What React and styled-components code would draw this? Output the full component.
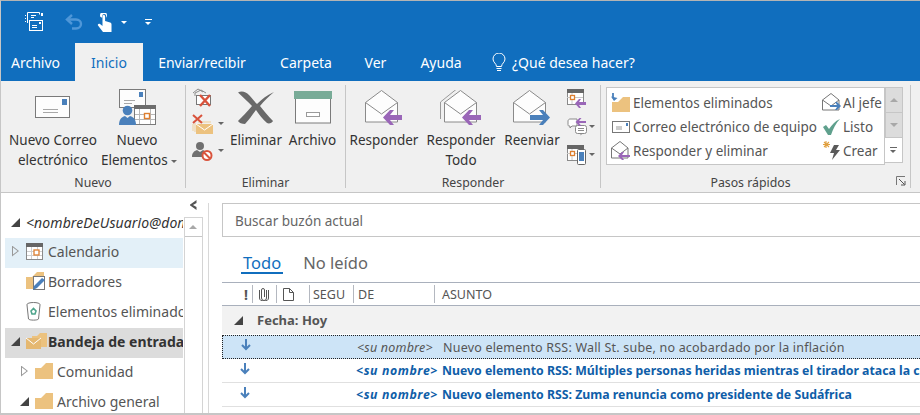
import styled, { createGlobalStyle } from 'styled-components'

const BLUE = '#106ebe'
const GREY = '#7a7a7a'
const PURPLE = '#9a66b8'
const STEEL = '#4a80bb'
const RED = '#d9533c'
const FOLDER = '#ecc27f'
const font = `"Noto Sans", "Open Sans", "Liberation Sans", sans-serif`

const Global = createGlobalStyle`
  html, body { margin: 0; padding: 0; background: #fff; }
  * { box-sizing: border-box; }
`

const Frame = styled.div`
  width: 920px;
  height: 415px;
  overflow: hidden;
  display: flex;
  flex-direction: column;
  border-top: 1px solid #b4b4b4;
  border-left: 1px solid #c6c6c6;
  border-bottom: 2px solid #c6c6c6;
  font-family: ${font};
  background: #fff;
`
const QuickBar = styled.div`
  height: 42px;
  flex: none;
  background: ${BLUE};
  display: flex;
  align-items: center;
  padding-left: 23px;
`
const QuickSlot = styled.div`
  width: ${({ $w }) => $w}px;
  display: flex;
  align-items: center;
`
const Customize = styled.span`
  display: block;
  width: 7px;
  height: 7px;
  border-top: 1px solid ${({ $dark }) => ($dark ? '#666' : '#fff')};
  position: relative;
  &::after {
    content: '';
    position: absolute;
    left: 0;
    top: 2px;
    border: 3.5px solid transparent;
    border-top-color: ${({ $dark }) => ($dark ? '#666' : '#fff')};
    border-bottom: 0;
  }
`
const TabRow = styled.div`
  height: 38px;
  flex: none;
  background: ${BLUE};
  display: flex;
  font-size: 14px;
`
const Tab = styled.div`
  width: ${({ $w }) => $w}px;
  margin-right: ${({ $gap }) => $gap || 0}px;
  display: flex;
  align-items: center;
  justify-content: center;
  color: ${({ $active }) => ($active ? BLUE : '#fff')};
  background: ${({ $active }) => ($active ? '#f0f0f0' : 'transparent')};
`
const TellMe = styled.div`
  display: flex;
  align-items: center;
  gap: 6px;
  padding-left: 10px;
  color: #fff;
`
const Ribbon = styled.div`
  height: 112px;
  flex: none;
  display: flex;
  padding-top: 4px;
  background: #f0f0f0;
  border-bottom: 1px solid #c6c6c6;
  color: #444;
  font-size: 13.5px;
`
const Group = styled.div`
  width: ${({ $w }) => $w}px;
  flex: none;
  display: flex;
  flex-direction: column;
`
const GroupBody = styled.div`
  height: 88px;
  display: flex;
  padding-left: ${({ $pad }) => $pad || 0}px;
`
const GroupLabel = styled.div`
  flex: 1;
  height: 19px;
  line-height: 19px;
  text-align: center;
  font-size: 12.3px;
  color: #444;
`
const Sep = styled.div`
  width: 1px;
  height: 103px;
  flex: none;
  background: #c6c6c6;
`
const BigButton = styled.div`
  width: ${({ $w }) => $w}px;
  flex: none;
  text-align: center;
  line-height: 20px;
  color: #333;
`
const IconSlot = styled.div`
  height: 45px;
  display: flex;
  align-items: center;
  justify-content: center;
  padding-top: ${({ $drop }) => $drop || 0}px;
`
const NoBreak = styled.div`
  white-space: nowrap;
`
const Caret = styled.span`
  display: inline-block;
  border: 3.5px solid transparent;
  border-top-color: ${({ $color }) => $color || '#666'};
  border-bottom: 0;
  vertical-align: middle;
`
const SmallColumn = styled.div`
  width: ${({ $w }) => $w}px;
  flex: none;
  padding-left: 3px;
  margin-top: ${({ $lift }) => -($lift || 0)}px;
  display: flex;
  flex-direction: column;
  gap: ${({ $gap }) => $gap || 0}px;
`
const SmallButton = styled.div`
  height: 27px;
  display: flex;
  align-items: center;
  gap: ${({ $gap }) => $gap || 5}px;
`
const Gallery = styled.div`
  width: 279px;
  height: 78px;
  margin-top: 2px;
  padding: 3px 0 0 2px;
  background: #fff;
  border: 1px solid #c6c6c6;
  overflow: hidden;
  display: flex;
  flex-direction: column;
`
const GalleryRow = styled.div`
  height: 24px;
  flex: none;
  display: flex;
  align-items: center;
  color: #555;
  white-space: nowrap;
`
const StepIcon = styled.div`
  width: ${({ $w }) => $w}px;
  flex: none;
  display: flex;
  justify-content: center;
`
const StepWide = styled.div`
  width: 188px;
  flex: none;
  overflow: hidden;
`
const StepText = styled.div`
  flex: 1;
  overflow: hidden;
`
const GalleryScroll = styled.div`
  width: 18px;
  height: 78px;
  margin-top: 2px;
  display: flex;
  flex-direction: column;
`
const ScrollStep = styled.div`
  height: 26px;
  display: flex;
  align-items: center;
  justify-content: center;
  background: ${({ $disabled }) => ($disabled ? '#dcdcdc' : '#fff')};
  border: 1px solid #c6c6c6;
  border-left: ${({ $disabled }) => ($disabled ? '1px solid #c6c6c6' : 'none')};
  margin-top: -1px;
  &:first-child { margin-top: 0; }
`
const Up = styled.span`
  display: block;
  border: 4px solid transparent;
  border-bottom-color: #a8a8a8;
  border-top: 0;
`
const Down = styled.span`
  display: block;
  border: 4px solid transparent;
  border-top-color: #a8a8a8;
  border-bottom: 0;
`
const StepsFoot = styled.div`
  position: relative;
  display: flex;
  padding-right: 10px;
`
const Launcher = styled.div`
  position: absolute;
  right: 4px;
  top: 3px;
  line-height: 0;
`
const Body = styled.div`
  flex: 1;
  min-height: 0;
  display: flex;
`
const NavTree = styled.div`
  width: 178px;
  margin-left: 4px;
  padding-top: 14px;
  flex: none;
  overflow: hidden;
  font-size: 14px;
  color: #444;
  white-space: nowrap;
`
const Account = styled.div`
  height: 31px;
  display: flex;
  align-items: center;
  font-style: italic;
  letter-spacing: 0.1px;
  color: #333;
  overflow: hidden;
`
const CaretSlot = styled.div`
  width: 21px;
  flex: none;
  display: flex;
  justify-content: center;
`
const OpenCaret = styled.span`
  display: inline-block;
  width: 0;
  height: 0;
  border-style: solid;
  border-width: 0 0 9px 9px;
  border-color: transparent transparent #444 transparent;
`
const ClosedCaret = styled.span`
  display: inline-block;
  width: 7px;
  height: 11px;
  background: #999;
  clip-path: polygon(0 0, 100% 50%, 0 100%, 0 0, 1px 2px, 1px calc(100% - 2px), calc(100% - 1.5px) 50%, 1px 2px);
`
const Folder = styled.div`
  height: 30px;
  display: flex;
  align-items: center;
  overflow: hidden;
  padding-bottom: 4px;
  padding-left: ${({ $indent }) => $indent || 0}px;
  background: ${({ $selected, $current }) => ($selected ? '#e3f0f8' : $current ? '#dcdcdc' : 'transparent')};
  font-weight: ${({ $current }) => ($current ? 700 : 400)};
  color: ${({ $current }) => ($current ? '#333' : '#555')};
`
const FolderIconSlot = styled.div`
  width: 22px;
  flex: none;
  display: flex;
  align-items: center;
`
const NavScroll = styled.div`
  width: 20px;
  flex: none;
  display: flex;
  flex-direction: column;
  align-items: center;
`
const Collapse = styled.div`
  width: 7px;
  height: 10px;
  margin: 7px 0 7px;
  background: #555;
  clip-path: polygon(100% 0, 100% 30%, 50% 50%, 100% 70%, 100% 100%, 0 50%);
`
const NavTrack = styled.div`
  width: 19px;
  flex: 1;
  border: 1px solid #d4d4d4;
  border-bottom: 0;
`
const NavUp = styled.div`
  height: 19px;
  display: flex;
  align-items: center;
  justify-content: center;
  border-bottom: 1px solid #c6c6c6;
  background: #fff;
`
const Main = styled.div`
  flex: 1;
  min-width: 0;
  margin: 10px 0 0 5px;
  padding-left: 13px;
  border-left: 1px solid #d8d8d8;
`
const Search = styled.div`
  height: 34px;
  width: 720px;
  display: flex;
  align-items: center;
  padding: 1px 0 0 12px;
  border: 1px solid #c6c6c6;
  font-size: 13.5px;
  color: #666;
`
const ViewTabs = styled.div`
  height: 46px;
  display: flex;
  align-items: flex-start;
  gap: 18px;
  padding: 13px 0 0 19px;
  border-bottom: 1px solid #a9b0bc;
  font-size: 16.5px;
`
const ViewTab = styled.div`
  height: 24px;
  line-height: 26px;
  padding: 0 2px;
  color: ${({ $active }) => ($active ? BLUE : '#666')};
  border-bottom: ${({ $active }) => ($active ? `2px solid ${BLUE}` : '0')};
`
const HeaderRow = styled.div`
  height: 23px;
  display: flex;
  align-items: center;
  border-bottom: 1px solid #a9b0bc;
  font-size: 12.5px;
  color: #555;
`
const HeaderCell = styled.div`
  width: ${({ $w }) => $w}px;
  height: 18px;
  flex: none;
  display: flex;
  align-items: center;
  justify-content: ${({ $first }) => ($first ? 'flex-end' : 'flex-start')};
  padding-left: ${({ $pad }) => $pad || 0}px;
  padding-right: ${({ $first }) => ($first ? 4 : 0)}px;
  border-left: ${({ $first }) => ($first ? 'none' : '1px solid #b4b8c0')};
  overflow: hidden;
  white-space: nowrap;
`
const Bang = styled.span`
  font-weight: 700;
  font-size: 14px;
`
const DateRow = styled.div`
  height: 29px;
  display: flex;
  align-items: center;
  gap: 14px;
  padding-left: 12px;
  background: #f2f2f2;
  border-bottom: 1px solid #fff;
  font-size: 13px;
  font-weight: 700;
  color: #555;
`
const Message = styled.div`
  height: 24px;
  width: 700px;
  display: grid;
  grid-template-columns: 46px 88px 86px 1fr;
  align-items: center;
  font-size: ${({ $unread }) => ($unread ? 12.3 : 12.5)}px;
  letter-spacing: ${({ $unread }) => ($unread ? 0 : 0.2)}px;
  white-space: nowrap;
  overflow: hidden;
  color: ${({ $unread }) => ($unread ? '#0f5ea8' : '#555')};
  font-weight: ${({ $unread }) => ($unread ? 700 : 400)};
  background: ${({ $selected }) => ($selected ? '#cde4f7' : 'transparent')};
  border: ${({ $selected }) => ($selected ? '1px dotted #222' : 'none')};
  border-bottom: ${({ $selected }) => ($selected ? '1px dotted #222' : '1px solid #e0e0e0')};
`
const ArrowCell = styled.div`
  display: flex;
  justify-content: center;
  margin-top: -4px;
`
const Sender = styled.span`
  font-style: italic;
  letter-spacing: ${({ $unread }) => ($unread ? 0.6 : 0.2)}px;
`
const Subject = styled.span`
  overflow: hidden;
`

/* ---------- icons ---------- */

const NewMailIcon = () => (
  <svg width="36" height="23" viewBox="0 0 36 23">
    <rect x="0.5" y="0.5" width="34" height="21" fill="#fdfdfd" stroke={GREY} />
    <rect x="27" y="3" width="5" height="6" fill={STEEL} />
    <path d="M8 13.5h15M8 16.5h15" stroke="#a8a8a8" />
  </svg>
)

const NewItemsIcon = () => (
  <svg width="37" height="37" viewBox="0 0 37 37">
    <rect x="0.5" y="0.5" width="26" height="18" fill="#fdfdfd" stroke={GREY} />
    <rect x="20" y="3" width="4" height="5" fill={STEEL} />
    <path d="M5 11.5h11M5 14.5h8" stroke="#a8a8a8" />
    <rect x="15.5" y="16.5" width="21" height="19" fill="#fff" stroke={GREY} />
    <rect x="15" y="16" width="22" height="4" fill="#6d6d6d" />
    <path d="M20.5 20v15M31.5 20v15M16 25.5h20M16 30.5h20" stroke="#b8b8b8" />
    <rect x="25.5" y="24.5" width="5" height="5" fill="#fff" stroke="#de7f2f" strokeWidth="1.4" />
    <circle cx="8.5" cy="21.5" r="4.8" fill={STEEL} />
    <path d="M0 36c0-5 2-8 6-9l2.500 2 2.500-2c4 1 6 4 6 9z" fill={STEEL} />
  </svg>
)

const BigXIcon = () => (
  <svg width="38" height="33" viewBox="0 0 38 33">
    <path d="M1 1.500C5-.5 9 1 12 4c3 3 5 6 8 9 5-5 10-9 17-12-5 4-10 9-14 14 4 5 8 10 13 15-1 2-4 3-6 2-5-4-8-9-11-13-4 5-7 10-11 14-3 0-6-1-7-3 4-4 9-9 14-15C11 11 6 6 1 1.500z" fill="#696969" />
  </svg>
)

const ArchiveIcon = () => (
  <svg width="38" height="33" viewBox="0 0 38 33">
    <rect x="1.500" y="2" width="35" height="30" fill="#fdfdfd" stroke={GREY} />
    <rect x="0" y="0" width="38" height="8" fill="#78ab97" />
    <rect x="12.500" y="21.500" width="13" height="4" fill="#fff" stroke="#9a9a9a" />
  </svg>
)

const ReplyIcon = ({ color = PURPLE, forward, all }) => (
  <svg width={all ? 42 : 38} height="37" viewBox={all ? '-4 0 42 37' : '0 0 38 37'}>
    {all && <path d="M-3.500 29V12L12-.5" fill="none" stroke="#9a9a9a" />}
    <path d="M0.500 12.500 16.500 0.500l16 12V32h-32z" fill="#fdfdfd" stroke="#8a8a8a" />
    <path d="M0.500 12.500 16.500 24l16-11.500" fill="none" stroke="#8a8a8a" />
    {forward ? (
      <path d="M17 25h13l-4-5h4l7 7.500-7 7.500h-4l4-5H17z" fill={color} />
    ) : (
      <path d="M37 25H25l4-5h-4l-7 7.500 7 7.500h4l-4-5h12z" fill={color} />
    )}
  </svg>
)

const StackXIcon = () => (
  <svg width="20" height="20" viewBox="0 0 20 20">
    <path d="M1 6 6 2l5 3M3 9V6l6-3 5 3" fill="none" stroke="#8a8a8a" />
    <rect x="4.500" y="8.500" width="14" height="9" fill="#fff" stroke="#777" />
    <path d="M8 8l10 11M18 8 8 19" stroke={RED} strokeWidth="2.400" />
  </svg>
)

const CleanIcon = () => (
  <svg width="21" height="20" viewBox="0 0 21 20">
    <path d="M1 10v7M3 9v9M6 8h13" stroke="#efd09a" fill="none" />
    <rect x="4" y="10" width="17" height="10" fill={FOLDER} />
    <path d="M4 10l8.500 6 8.500-6" fill="none" stroke="#fff" />
    <path d="M1 1l9 8M10 1 1 9" stroke={RED} strokeWidth="2" />
  </svg>
)

const BlockIcon = () => (
  <svg width="21" height="20" viewBox="0 0 21 20">
    <circle cx="8" cy="5" r="4" fill="#707070" />
    <path d="M0 16c0-4 2-6 5-7l3 2 3-2c2 1 3 2 3 3l-3 4z" fill="#707070" />
    <circle cx="15" cy="14.500" r="4.500" fill="#fff" stroke={RED} strokeWidth="2" />
    <path d="M12 11.500l6 6" stroke={RED} strokeWidth="2" />
  </svg>
)

const CalReplyIcon = ({ phone }) => (
  <svg width="20" height="20" viewBox="0 0 20 20">
    <rect x="0.500" y="0.500" width="16" height="15" fill="#fff" stroke="#8a8a8a" />
    <rect x="0" y="0" width="17" height="4" fill="#666" />
    <path d="M0 8.500h16M5 4v11" stroke="#c8c8c8" />
    <rect x="3.500" y="6.500" width="4" height="4" fill="#fff" stroke="#de7f2f" strokeWidth="1.300" />
    {phone ? (
      <>
        <rect x="10.500" y="4.500" width="8" height="15" rx="1" fill="#fff" stroke="#666" />
        <rect x="12" y="7" width="5" height="9" fill={STEEL} />
      </>
    ) : (
      <path d="M19 13h-7l2-3h-2l-4 4.500 4 4.500h2l-2-3h7z" fill={PURPLE} />
    )}
  </svg>
)

const ChatReplyIcon = () => (
  <svg width="20" height="20" viewBox="0 0 20 20">
    <path d="M3 2h7v7H5l-2 2V9H2C1 9 1 8 1 7V4c0-1 1-2 2-2z" fill="#fff" stroke="#8a8a8a" />
    <rect x="8.500" y="8.500" width="11" height="8" rx="2" fill="#fff" stroke="#8a8a8a" />
    <path d="M11 11.500h6M11 13.500h6" stroke="#8a8a8a" />
    <path d="M13 18.500l1-2h2z" fill="#8a8a8a" />
    <path d="M19 4h-7l2.500-3h-2L8.500 5l4 4h2L12 6h7z" fill={PURPLE} />
  </svg>
)

const FolderIcon = () => (
  <svg width="18" height="16" viewBox="0 0 18 16">
    <path d="M0 5h6l5-5h7v16H0z" fill={FOLDER} />
  </svg>
)

const MoveFolderIcon = () => (
  <svg width="20" height="20" viewBox="0 0 20 20">
    <path d="M1 9h6l5-5h7v15H1z" fill={FOLDER} />
    <path d="M2 0v4c0 1 1 2 2 2" fill="none" stroke={STEEL} strokeWidth="1.800" />
    <path d="M0 3.500 3 8l3.500-3z" fill={STEEL} />
  </svg>
)

const TinyMailIcon = () => (
  <svg width="18" height="13" viewBox="0 0 18 13">
    <rect x="0.500" y="0.500" width="17" height="11" fill="#fff" stroke="#777" />
    <rect x="14" y="2" width="2" height="3" fill={STEEL} />
    <path d="M4 6h6M4 8h6" stroke="#999" />
  </svg>
)

const TinyOpenMailIcon = ({ forward }) => (
  <svg width="20" height="20" viewBox="0 0 20 20">
    <path d="M0.500 7 9 0.500 17 7v10H0.500z" fill="#fff" stroke="#777" />
    <path d="M0.500 7 9 13l8-6" fill="none" stroke="#777" />
    {forward ? (
      <path d="M8 12h7l-2-3h2l4 4-4 4h-2l2-3H8z" fill={STEEL} />
    ) : (
      <path d="M19 14h-8l2-3h-2l-4 4 4 4h2l-2-3h8z" fill={PURPLE} />
    )}
  </svg>
)

const CheckIcon = () => (
  <svg width="18" height="16" viewBox="0 0 18 16">
    <path d="M0 8l3-2 3 4c3-4 6-8 11-10-4 4-7 10-9 16H5z" fill="#5fa08d" />
  </svg>
)

const BoltIcon = () => (
  <svg width="18" height="20" viewBox="0 0 18 20">
    <path d="M3 0v7M0 3.500h7M1 1l5 5M6 1 1 6" stroke="#e0a040" strokeWidth="1.100" />
    <path d="M11 4h5l-3 5h4l-8 10 2-7H7z" fill="#5a5a5a" />
  </svg>
)

const SendAllIcon = () => (
  <svg width="20" height="20" viewBox="0 0 20 20" fill="none" stroke="#fff">
    <path d="M3.500 11V.5h12v2M1 3.500h1M1 6.500h1M1 9.500h1" />
    <rect x="5.500" y="8.500" width="13" height="10" fill={BLUE} />
    <path d="M8 13.500h5M8 15.500h5" />
    <rect x="15" y="10" width="2" height="2" fill="#fff" stroke="none" />
    <path d="M7 3.500h5M7 5.500h3" />
    <rect x="17" y="1" width="2" height="3" fill="#fff" stroke="none" />
  </svg>
)

const UndoIcon = () => (
  <svg width="18" height="16" viewBox="0 0 18 16" fill="none" stroke="#4f97d8" strokeWidth="2.400">
    <path d="M7 1 2 5.500 7 10" />
    <path d="M2 5.500h9c3 0 5 2 5 4.500s-2 4.500-5 4.500H7" />
  </svg>
)

const TouchIcon = () => (
  <svg width="15" height="19" viewBox="0 0 15 19">
    <path d="M3 2.500a3.500 3.500 0 0 1 7 0c0 1-.3 1.700-.8 2.300V3a2 2 0 0 0-4 0v1.800C3.300 4.200 3 3.500 3 2.500z" fill="#fff" />
    <path d="M5.500 3.200a1.300 1.300 0 0 1 2.600 0V8l5 1.500c1 .3 1.400 1 1.400 2V19H6L1 12.500c-.7-1 .5-2.500 2-1.500l2.500 2z" fill="#fff" />
  </svg>
)

const BulbIcon = () => (
  <svg width="14" height="19" viewBox="0 0 14 19" fill="none" stroke="#fff">
    <path d="M4.500 13.500c0-3-3.500-4-3.500-7.500a6 6 0 0 1 12 0c0 3.500-3.500 4.500-3.500 7.500z" />
    <path d="M4.500 15.500h5M5 17.500h4" />
  </svg>
)

const CalendarIcon = () => (
  <svg width="17" height="17" viewBox="0 0 17 17">
    <rect x="0.500" y="0.500" width="16" height="16" fill="#fff" stroke="#8a8a8a" />
    <rect x="0" y="0" width="17" height="4" fill="#666" />
    <path d="M5.500 4v12M11.500 4v12M1 8.500h15M1 12.500h15" stroke="#d0d0d0" />
    <rect x="8" y="7" width="5" height="5" fill="#fff" stroke="#de7f2f" strokeWidth="1.300" />
  </svg>
)

const DraftsIcon = () => (
  <svg width="20" height="19" viewBox="0 0 20 19">
    <path d="M0 5h6l5-5h7v17H0z" fill={FOLDER} />
    <rect x="7.500" y="4.500" width="11" height="13" fill="#fff" stroke="#777" />
    <path d="M7 18l1-4 8-8 3 2-8 8z" fill={STEEL} />
  </svg>
)

const TrashIcon = () => (
  <svg width="15" height="19" viewBox="0 0 15 19">
    <ellipse cx="7.500" cy="2.500" rx="6.500" ry="2" fill="#fff" stroke="#777" />
    <path d="M1 3l1.500 14c1 1.500 9 1.500 10 0L14 3" fill="#fff" stroke="#777" />
    <path d="M5 9l2.500-2.500L10 9l-1 3H6z" fill="none" stroke="#4ea58c" strokeWidth="1.600" />
  </svg>
)

const InboxIcon = () => (
  <svg width="21" height="16" viewBox="0 0 21 16">
    <path d="M6 6V3h5l3-3h7v14h-6z" fill={FOLDER} />
    <rect x="0" y="5" width="15" height="11" fill="#e5b871" />
    <path d="M0 5l7.500 6L15 5" fill="none" stroke="#fff" />
  </svg>
)

const ClipIcon = () => (
  <svg width="10" height="14" viewBox="0 0 10 14" fill="none" stroke="#555">
    <path d="M7.500 3v8a2.500 2.500 0 0 1-5 0V3a1.500 1.500 0 0 1 3 0v7" />
    <path d="M.5 3v8a4.500 3 0 0 0 9 0V3" />
  </svg>
)

const DocIcon = () => (
  <svg width="11" height="13" viewBox="0 0 11 13" fill="none" stroke="#555">
    <path d="M.5.5h6l4 4v8H.5zM6.500.5v4h4" />
  </svg>
)

const DownArrow = () => (
  <svg width="10" height="12" viewBox="0 0 10 12" fill="none" stroke={STEEL} strokeWidth="2">
    <path d="M5 0v10M1 6l4 4 4-4" />
  </svg>
)

const LauncherIcon = () => (
  <svg width="10" height="10" viewBox="0 0 10 10" fill="none" stroke="#777">
    <path d="M.5 9V.5H9" />
    <path d="M3 3l5.500 5.500M9 5v4H5" stroke="#555" />
  </svg>
)

/* ---------- data ---------- */

const tabs = [
  { label: 'Archivo', w: 69, gap: 5 },
  { label: 'Inicio', w: 68, active: true },
  { label: 'Enviar/recibir', w: 118 },
  { label: 'Carpeta', w: 90 },
  { label: 'Ver', w: 49 },
  { label: 'Ayuda', w: 82 }
]

const steps = [
  [<MoveFolderIcon key="i" />, 'Elementos eliminados', <TinyOpenMailIcon key="j" forward />, 'Al jefe'],
  [<TinyMailIcon key="i" />, 'Correo electrónico de equipo', <CheckIcon key="j" />, 'Listo'],
  [<TinyOpenMailIcon key="i" />, 'Responder y eliminar', <BoltIcon key="j" />, 'Crear']
]

const folders = [
  { label: 'Calendario', icon: <CalendarIcon />, caret: 'closed', selected: true },
  { label: 'Borradores', icon: <DraftsIcon /> },
  { label: 'Elementos eliminados', icon: <TrashIcon /> },
  { label: 'Bandeja de entrada', icon: <InboxIcon />, caret: 'open', current: true },
  { label: 'Comunidad', icon: <FolderIcon />, caret: 'closed', indent: 9 },
  { label: 'Archivo general', icon: <FolderIcon />, caret: 'open', indent: 9 }
]

const columns = [
  { w: 30, content: <Bang>!</Bang> },
  { w: 24, content: <ClipIcon />, pad: 6 },
  { w: 33, content: <DocIcon />, pad: 6 },
  { w: 44, content: 'SEGU', pad: 3 },
  { w: 81, content: 'DE', pad: 4 },
  { w: 200, content: 'ASUNTO', pad: 7 }
]

const messages = [
  { subject: 'Nuevo elemento RSS: Wall St. sube, no acobardado por la inflación', selected: true },
  { subject: 'Nuevo elemento RSS: Múltiples personas heridas mientras el tirador ataca la comunidad', unread: true },
  { subject: 'Nuevo elemento RSS: Zuma renuncia como presidente de Sudáfrica', unread: true }
]

/* ---------- page ---------- */

const App = () => (
  <>
    <Global />
    <Frame>
      <QuickBar>
        <QuickSlot $w={41}><SendAllIcon /></QuickSlot>
        <QuickSlot $w={32}><UndoIcon /></QuickSlot>
        <QuickSlot $w={24}><TouchIcon /></QuickSlot>
        <QuickSlot $w={24}><Caret $color="#fff" /></QuickSlot>
        <QuickSlot $w={20}><Customize /></QuickSlot>
      </QuickBar>

      <TabRow>
        {tabs.map((tab) => (
          <Tab key={tab.label} $w={tab.w} $gap={tab.gap} $active={tab.active}>
            {tab.label}
          </Tab>
        ))}
        <TellMe>
          <BulbIcon />
          ¿Qué desea hacer?
        </TellMe>
      </TabRow>

      <Ribbon>
        <Group $w={184}>
          <GroupBody $pad={4}>
            <BigButton $w={96}>
              <IconSlot><NewMailIcon /></IconSlot>
              Nuevo Correo electrónico
            </BigButton>
            <BigButton $w={72}>
              <IconSlot><NewItemsIcon /></IconSlot>
              Nuevo
              <NoBreak>Elementos <Caret /></NoBreak>
            </BigButton>
          </GroupBody>
          <GroupLabel>Nuevo</GroupLabel>
        </Group>
        <Sep />
        <Group $w={159}>
          <GroupBody $pad={3}>
            <SmallColumn $w={39} $lift={2}>
              <SmallButton><StackXIcon /></SmallButton>
              <SmallButton><CleanIcon /><Caret /></SmallButton>
              <SmallButton><BlockIcon /><Caret /></SmallButton>
            </SmallColumn>
            <BigButton $w={56}>
              <IconSlot><BigXIcon /></IconSlot>
              Eliminar
            </BigButton>
            <BigButton $w={57}>
              <IconSlot><ArchiveIcon /></IconSlot>
              Archivo
            </BigButton>
          </GroupBody>
          <GroupLabel>Eliminar</GroupLabel>
        </Group>
        <Sep />
        <Group $w={254}>
          <GroupBody>
            <BigButton $w={76}>
              <IconSlot $drop={2}><ReplyIcon /></IconSlot>
              Responder
            </BigButton>
            <BigButton $w={78}>
              <IconSlot $drop={2}><ReplyIcon all /></IconSlot>
              Responder Todo
            </BigButton>
            <BigButton $w={64}>
              <IconSlot $drop={2}><ReplyIcon forward color={STEEL} /></IconSlot>
              Reenviar
            </BigButton>
            <SmallColumn $w={36} $gap={1}>
              <SmallButton><CalReplyIcon /></SmallButton>
              <SmallButton $gap={2}><ChatReplyIcon /><Caret /></SmallButton>
              <SmallButton $gap={2}><CalReplyIcon phone /><Caret /></SmallButton>
            </SmallColumn>
          </GroupBody>
          <GroupLabel>Responder</GroupLabel>
        </Group>
        <Sep />
        <Group $w={309}>
          <GroupBody $pad={5}>
            <Gallery>
              {steps.map(([iconA, textA, iconB, textB]) => (
                <GalleryRow key={textA}>
                  <StepIcon $w={24}>{iconA}</StepIcon>
                  <StepWide>{textA}</StepWide>
                  <StepIcon $w={22}>{iconB}</StepIcon>
                  <StepText>{textB}</StepText>
                </GalleryRow>
              ))}
            </Gallery>
            <GalleryScroll>
              <ScrollStep $disabled><Up /></ScrollStep>
              <ScrollStep $disabled><Down /></ScrollStep>
              <ScrollStep><Customize $dark /></ScrollStep>
            </GalleryScroll>
          </GroupBody>
          <StepsFoot>
            <GroupLabel>Pasos rápidos</GroupLabel>
            <Launcher><LauncherIcon /></Launcher>
          </StepsFoot>
        </Group>
        <Sep />
      </Ribbon>

      <Body>
        <NavTree>
          <Account>
            <CaretSlot><OpenCaret /></CaretSlot>
            &lt;nombreDeUsuario@dominio
          </Account>
          {folders.map((folder) => (
            <Folder
              key={folder.label}
              $selected={folder.selected}
              $current={folder.current}
              $indent={folder.indent}
            >
              <CaretSlot>
                {folder.caret === 'open' && <OpenCaret />}
                {folder.caret === 'closed' && <ClosedCaret />}
              </CaretSlot>
              <FolderIconSlot>{folder.icon}</FolderIconSlot>
              {folder.label}
            </Folder>
          ))}
        </NavTree>

        <NavScroll>
          <Collapse />
          <NavTrack>
            <NavUp><Up /></NavUp>
          </NavTrack>
        </NavScroll>

        <Main>
          <Search>Buscar buzón actual</Search>
          <ViewTabs>
            <ViewTab $active>Todo</ViewTab>
            <ViewTab>No leído</ViewTab>
          </ViewTabs>
          <HeaderRow>
            {columns.map((col, idx) => (
              <HeaderCell key={idx} $w={col.w} $pad={col.pad} $first={idx === 0}>
                {col.content}
              </HeaderCell>
            ))}
          </HeaderRow>
          <DateRow>
            <OpenCaret />
            Fecha: Hoy
          </DateRow>
          {messages.map((msg) => (
            <Message key={msg.subject} $selected={msg.selected} $unread={msg.unread}>
              <ArrowCell><DownArrow /></ArrowCell>
              <span />
              <Sender $unread={msg.unread}>&lt;su nombre&gt;</Sender>
              <Subject>{msg.subject}</Subject>
            </Message>
          ))}
        </Main>
      </Body>
    </Frame>
  </>
)

export default App
